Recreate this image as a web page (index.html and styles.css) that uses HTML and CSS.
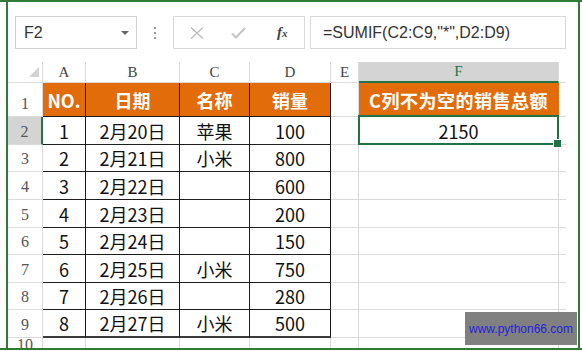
FILE: index.html
```html
<!DOCTYPE html>
<html lang="zh-CN">
<head>
    <meta charset="UTF-8">
    <meta name="viewport" content="width=device-width, initial-scale=1.0">
    <title>SUMIF 非空求和</title>
    <link rel="stylesheet" href="styles.css">
</head>
<body>
    <div class="page">
        <div class="frame">
            <div class="toolbar">
                <div class="namebox">
                    <span>F2</span>
                    <span class="arrow"></span>
                </div>
                <div class="grip"><i></i><i></i><i></i></div>
                <div class="fxbtns">
                    <svg width="14" height="12" viewBox="0 0 14 12"><path d="M1 0.5 L13 11.5 M13 0.5 L1 11.5" stroke="#bdbdbd" stroke-width="1.4" fill="none"/></svg>
                    <svg width="15" height="12" viewBox="0 0 15 12"><path d="M1 6.5 L5 10.5 L14 1" stroke="#c4c4c4" stroke-width="2" fill="none"/></svg>
                    <span class="fx">f<small>x</small></span>
                </div>
                <div class="formula">=SUMIF(C2:C9,"*",D2:D9)</div>
            </div>

            <div class="sheet">
                <!-- column letters -->
                <div class="corner"></div>
                <div class="colh">A</div>
                <div class="colh">B</div>
                <div class="colh">C</div>
                <div class="colh">D</div>
                <div class="colh">E</div>
                <div class="colh sel">F</div>
                <div class="colh tail"></div>

                <div class="rowh">1</div>
                <div class="c hd">NO.</div>
                <div class="c hd">日期</div>
                <div class="c hd">名称</div>
                <div class="c hd">销量</div>
                <div class="g"></div>
                <div class="g hd">C列不为空的销售总额</div>
                <div class="g tail"></div>

                <div class="rowh sel">2</div>
                <div class="c">1</div>
                <div class="c">2月20日</div>
                <div class="c">苹果</div>
                <div class="c">100</div>
                <div class="g"></div>
                <div class="g active">2150</div>
                <div class="g tail"></div>

                <div class="rowh">3</div>
                <div class="c">2</div>
                <div class="c">2月21日</div>
                <div class="c">小米</div>
                <div class="c">800</div>
                <div class="g"></div>
                <div class="g"></div>
                <div class="g tail"></div>

                <div class="rowh">4</div>
                <div class="c">3</div>
                <div class="c">2月22日</div>
                <div class="c"></div>
                <div class="c">600</div>
                <div class="g"></div>
                <div class="g"></div>
                <div class="g tail"></div>

                <div class="rowh">5</div>
                <div class="c">4</div>
                <div class="c">2月23日</div>
                <div class="c"></div>
                <div class="c">200</div>
                <div class="g"></div>
                <div class="g"></div>
                <div class="g tail"></div>

                <div class="rowh">6</div>
                <div class="c">5</div>
                <div class="c">2月24日</div>
                <div class="c"></div>
                <div class="c">150</div>
                <div class="g"></div>
                <div class="g"></div>
                <div class="g tail"></div>

                <div class="rowh">7</div>
                <div class="c">6</div>
                <div class="c">2月25日</div>
                <div class="c">小米</div>
                <div class="c">750</div>
                <div class="g"></div>
                <div class="g"></div>
                <div class="g tail"></div>

                <div class="rowh">8</div>
                <div class="c">7</div>
                <div class="c">2月26日</div>
                <div class="c"></div>
                <div class="c">280</div>
                <div class="g"></div>
                <div class="g"></div>
                <div class="g tail"></div>

                <div class="rowh">9</div>
                <div class="c end">8</div>
                <div class="c end">2月27日</div>
                <div class="c end">小米</div>
                <div class="c end">500</div>
                <div class="g"></div>
                <div class="g"></div>
                <div class="g tail"></div>

                <div class="rowh">10</div>
                <div class="g"></div>
                <div class="g"></div>
                <div class="g"></div>
                <div class="g"></div>
                <div class="g"></div>
                <div class="g"></div>
                <div class="g tail"></div>
            </div>
        </div>
    </div>

    <div class="watermark">www.python66.com</div>
</body>
</html>
```

FILE: styles.css
```css
* {
    box-sizing: border-box;
}

body {
    margin: 0;
    height: 351px;
    background: #fff;
    font-family: 'Liberation Sans', Arial, sans-serif;
    position: relative;
    overflow: hidden;
}

.page {
    border-top: 2px solid #2f7a35;
    border-bottom: 2px solid #2f7a35;
    padding-left: 6px;
}

.frame {
    width: 574px;
    height: 346px;
    border-left: 2px solid #2f7a35;
    border-right: 2px solid #2f7a35;
    overflow: hidden;
}

/* formula bar */
.toolbar {
    display: flex;
    align-items: center;
    padding: 14px 0 0 7px;
    height: 47px;
}

.namebox {
    width: 122px;
    height: 33px;
    border: 1px solid #d0d0d0;
    display: flex;
    align-items: center;
    justify-content: space-between;
    padding: 0 7px 0 8px;
    font-size: 16px;
    color: #333;
}

.arrow {
    width: 0;
    height: 0;
    border-left: 4px solid transparent;
    border-right: 4px solid transparent;
    border-top: 4px solid #666;
}

.grip {
    width: 36px;
    display: flex;
    flex-direction: column;
    align-items: center;
    gap: 3px;
}

.grip i {
    width: 2px;
    height: 2px;
    background: #9a9a9a;
}

.fxbtns {
    width: 132px;
    height: 33px;
    border: 1px solid #d8d8d8;
    display: flex;
    align-items: center;
    padding-left: 16px;
    gap: 27px;
}

.fx {
    font-family: 'Liberation Serif', serif;
    font-style: italic;
    font-weight: bold;
    font-size: 15px;
    color: #444;
    margin-left: 4px;
}

.fx small {
    font-size: 11px;
}

.formula {
    width: 256px;
    height: 33px;
    margin-left: 5px;
    border: 1px solid #d8d8d8;
    display: flex;
    align-items: center;
    padding-left: 12px;
    font-size: 16px;
    color: #333;
}

/* worksheet */
.sheet {
    margin-top: 13px;
    display: grid;
    grid-template-columns: 35px 43px 94px 70px 81px 28px 200px 7px;
    grid-template-rows: 21px 34px 28px 27px 28px 28px 27px 28px 27px 28px 20px;
    font-family: 'Noto Sans CJK SC', sans-serif;
    font-size: 18px;
    color: #111;
}

.sheet > div {
    border-right: 1px solid #dadada;
    border-bottom: 1px solid #dadada;
    display: flex;
    align-items: center;
    justify-content: center;
    line-height: 1;
}

.sheet > .tail {
    border-right: none;
}

.corner {
    position: relative;
}

.corner::after {
    content: '';
    position: absolute;
    right: 3px;
    bottom: 5px;
    border-left: 10px solid transparent;
    border-bottom: 10px solid #d3d3d3;
}

.sheet > .colh {
    font-family: 'Liberation Serif', serif;
    font-size: 15px;
    color: #444;
    align-items: flex-end;
    padding-bottom: 2px;
}

.sheet > .colh.sel {
    background: #d4d4d4;
    color: #217346;
    border-bottom: 2px solid #217346;
}

.sheet > .rowh {
    font-family: 'Liberation Serif', serif;
    font-size: 16px;
    color: #555;
    align-items: flex-end;
    padding-bottom: 4px;
}

.sheet > .rowh.sel {
    background: #d4d4d4;
    border-right: 2px solid #217346;
}

.sheet > .c {
    border-right-color: #1c1c1c;
    border-bottom-color: #1c1c1c;
}

.sheet > .c.end {
    border-bottom: 2px solid #3a3a3a;
}

.sheet > .hd {
    background: #e26b0a;
    color: #fff;
    font-weight: bold;
}

.sheet > .g.hd {
    border-right-color: #e26b0a;
    letter-spacing: 0.5px;
}

.sheet > .active {
    position: relative;
}

.active::before {
    content: '';
    position: absolute;
    top: -2px;
    left: -1px;
    right: -1px;
    bottom: -1px;
    border: 2px solid #217346;
}

.active::after {
    content: '';
    position: absolute;
    right: -4px;
    bottom: -4px;
    width: 7px;
    height: 7px;
    background: #217346;
    border: 1px solid #fff;
}

.watermark {
    position: absolute;
    left: 465px;
    top: 312px;
    width: 112px;
    height: 33px;
    background: #808080;
    color: #2323d8;
    font-size: 12px;
    display: flex;
    align-items: center;
    justify-content: center;
}
```
